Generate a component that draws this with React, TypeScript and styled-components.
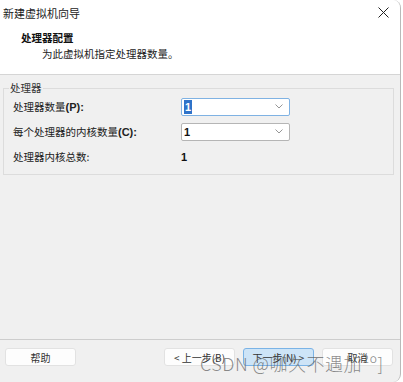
import styled, { createGlobalStyle } from 'styled-components';

const GlobalStyle = createGlobalStyle`
  html, body {
    margin: 0;
    padding: 0;
    background: #ffffff;
  }
  body {
    font-family: "Liberation Sans", "Noto Sans CJK SC", sans-serif;
    color: #1a1a1a;
  }
`;

const CJK = `"Noto Sans CJK SC", "Liberation Sans", sans-serif`;

function Chevron() {
  return (
    <svg width="8" height="5" viewBox="0 0 8 5">
      <path d="M0.5 0.5 L4 4 L7.5 0.5" fill="none" stroke="#8a8a8a" strokeWidth="0.9" />
    </svg>
  );
}

function App() {
  return (
    <>
      <GlobalStyle />
      <Window>
        <TitleBar>
          <Title>新建虚拟机向导</Title>
          <CloseBtn>
            <svg width="11" height="11" viewBox="0 0 11 11">
              <path d="M0.5 0.5 L10.5 10.5 M10.5 0.5 L0.5 10.5" stroke="#222" strokeWidth="1" />
            </svg>
          </CloseBtn>
        </TitleBar>
        <Header>
          <HeaderTitle>处理器配置</HeaderTitle>
          <HeaderSub>为此虚拟机指定处理器数量。</HeaderSub>
        </Header>
        <Body>
          <GroupBox>
            <Legend>处理器</Legend>
            <Row>
              <Label>
                处理器数量<Latin>(P):</Latin>
              </Label>
              <Combo $focused>
                <Selected>1</Selected>
                <Chevron />
              </Combo>
            </Row>
            <Row>
              <Label>
                每个处理器的内核数量<Latin>(C):</Latin>
              </Label>
              <Combo>
                <ComboValue>1</ComboValue>
                <Chevron />
              </Combo>
            </Row>
            <Row>
              <Label>处理器内核总数:</Label>
              <Value>1</Value>
            </Row>
          </GroupBox>
        </Body>
        <Footer>
          <Button>帮助</Button>
          <Spacer />
          <Button>&lt; 上一步(B)</Button>
          <Button $primary>下一步(N) &gt;</Button>
          <Button>取消</Button>
        </Footer>
        <Watermark>CSDN @咖久不遇加²º]</Watermark>
      </Window>
    </>
  );
}

const Window = styled.div`
  position: relative;
  width: 400px;
  height: 382px;
  display: flex;
  flex-direction: column;
  background: #f0f0f0;
  border-right: 1px solid #b9b9b9;
  border-top-right-radius: 8px;
  border-bottom-right-radius: 8px;
  overflow: hidden;
`;
const TitleBar = styled.div`
  height: 25px;
  display: flex;
  align-items: center;
  justify-content: space-between;
  padding: 0 11px 0 3px;
  background: #ffffff;
`;
const Title = styled.div`
  font-family: ${CJK};
  font-size: 11px;
  color: #1a1a1a;
`;
const CloseBtn = styled.div`
  display: flex;
  align-items: center;
`;
const Header = styled.div`
  height: 50px;
  background: #ffffff;
  border-bottom: 1px solid #d5d5d5;
  padding: 6px 0 0 21px;
  box-sizing: border-box;
`;
const HeaderTitle = styled.div`
  font-family: ${CJK};
  font-size: 10.5px;
  font-weight: 700;
  line-height: 14px;
  color: #111;
`;
const HeaderSub = styled.div`
  font-family: ${CJK};
  font-size: 10.5px;
  line-height: 14px;
  margin-top: 2px;
  padding-left: 21px;
  color: #222;
`;
const Body = styled.div`
  flex: 1;
  padding: 7px 6px 0 3px;
`;
const GroupBox = styled.fieldset`
  margin: 0;
  padding: 3px 0 6px 9px;
  border: 1px solid #dcdcdc;
  height: 93px;
  box-sizing: border-box;
  display: flex;
  flex-direction: column;
  gap: 6px;
`;
const Legend = styled.legend`
  font-family: ${CJK};
  font-size: 10.5px;
  color: #333;
  padding: 0 1px;
  margin-left: -4px;
  line-height: 12px;
`;
const Row = styled.div`
  display: flex;
  align-items: center;
  height: 19px;
`;
const Label = styled.div`
  width: 168px;
  font-family: ${CJK};
  font-size: 10.5px;
  color: #222;
`;
const Latin = styled.span`
  font-family: "Liberation Sans", sans-serif;
  font-size: 11px;
  font-weight: 700;
`;
const Combo = styled.div<{ $focused?: boolean }>`
  width: 109px;
  height: 18px;
  box-sizing: border-box;
  background: #ffffff;
  border: 1px solid ${({ $focused }) => ($focused ? '#7fb2e3' : '#b5b5b5')};
  border-radius: 2px;
  display: flex;
  align-items: center;
  justify-content: space-between;
  padding: 0 6px 0 2px;
`;
const ComboValue = styled.span`
  font-family: "Liberation Sans", sans-serif;
  font-size: 11px;
  font-weight: 700;
  color: #111;
`;
const Selected = styled(ComboValue)`
  background: #2f73c9;
  color: #ffffff;
  padding: 0 1px;
  line-height: 14px;
`;
const Value = styled(ComboValue)`
  padding-left: 0;
`;
const Footer = styled.div`
  height: 34px;
  border-top: 1px solid #cdcdcd;
  display: flex;
  align-items: flex-start;
  padding: 8px 7px 0 5px;
  gap: 8px;
`;
const Spacer = styled.div`
  flex: 1;
`;
const Button = styled.div<{ $primary?: boolean }>`
  width: 71px;
  height: 18px;
  box-sizing: border-box;
  display: flex;
  align-items: center;
  justify-content: center;
  font-family: ${CJK};
  font-size: 10px;
  color: #333;
  border-radius: 3px;
  background: ${({ $primary }) => ($primary ? '#cde4f7' : '#fdfdfd')};
  border: 1px solid ${({ $primary }) => ($primary ? '#7ab3e6' : '#e2e2e2')};
`;
const Watermark = styled.div`
  position: absolute;
  left: 200px;
  top: 352px;
  font-family: ${CJK};
  font-size: 18px;
  font-weight: 300;
  line-height: 22px;
  letter-spacing: 0.5px;
  color: rgba(90, 90, 90, 0.7);
  white-space: nowrap;
  pointer-events: none;
`;

export default App;
